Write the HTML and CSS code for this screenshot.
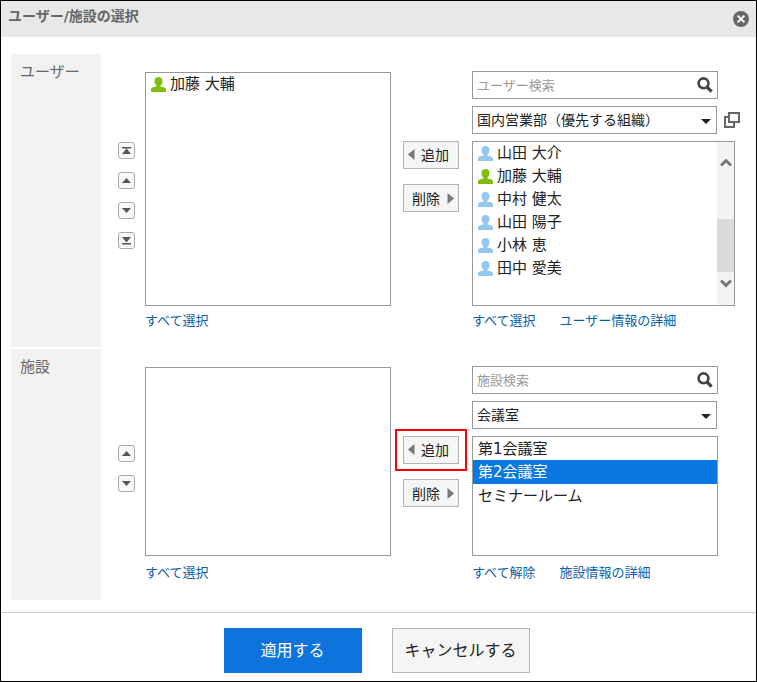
FILE: index.html
```html
<!DOCTYPE html>
<html lang="ja">
<head>
<meta charset="utf-8">
<meta name="viewport" content="width=device-width, initial-scale=1">
<title>ユーザー/施設の選択</title>
<link rel="stylesheet" href="styles.css">
</head>
<body>
<svg class="defs" aria-hidden="true">
  <symbol id="person" viewBox="0 0 15 15"><path d="M7.500 0C5 0 3.500 1.500 3.500 4c0 1.900.8 3.600 2 4.600v1C4.500 10.100 0 10.200 0 12.400V15h15v-2.600c0-2.200-4.500-2.300-5.500-2.800v-1c1.200-1 2-2.700 2-4.600C11.500 1.500 10 0 7.500 0z"/></symbol>
  <symbol id="search" viewBox="0 0 16 16"><circle cx="6.500" cy="6.300" r="4.900" fill="none" stroke="currentColor" stroke-width="2.600"/><path d="M10 10l4.600 4.600" stroke="currentColor" stroke-width="3.200"/></symbol>
  <symbol id="up" viewBox="0 0 17 17"><path d="M8.500 6L13 11H4z"/></symbol>
  <symbol id="down" viewBox="0 0 17 17"><path d="M8.500 11L4 6h9z"/></symbol>
  <symbol id="top" viewBox="0 0 17 17"><path d="M4 5h9v1.500H4zM8.500 6.500L13 12H4z"/></symbol>
  <symbol id="bottom" viewBox="0 0 17 17"><path d="M4 11h9v1.500H4zM8.500 10.500L4 5h9z"/></symbol>
  <symbol id="left" viewBox="0 0 7 11"><path d="M6.500 0v11L0 5.500z"/></symbol>
  <symbol id="right" viewBox="0 0 7 11"><path d="M.5 0v11L7 5.500z"/></symbol>
  <symbol id="caret" viewBox="0 0 10 5"><path d="M0 0h10L5 5z"/></symbol>
</svg>
<main class="dialog" role="dialog" aria-labelledby="dialog-title">
  <header class="header">
    <h1 class="title" id="dialog-title">ユーザー/施設の選択</h1>
    <button class="close" type="button" aria-label="閉じる">
      <svg viewBox="0 0 16 16"><circle cx="8" cy="8" r="8" fill="#686868"/><path d="M4.600 4.600l6.800 6.800M11.400 4.600l-6.800 6.800" stroke="#fff" stroke-width="2"/></svg>
    </button>
  </header>

  <div class="body">
    <section class="section">
      <h2 class="label">ユーザー</h2>
      <div class="picker picker-users">
        <div class="order">
          <button type="button" aria-label="先頭へ"><svg><use href="#top"/></svg></button>
          <button type="button" aria-label="上へ"><svg><use href="#up"/></svg></button>
          <button type="button" aria-label="下へ"><svg><use href="#down"/></svg></button>
          <button type="button" aria-label="末尾へ"><svg><use href="#bottom"/></svg></button>
        </div>
        <div class="box chosen">
          <ul class="people">
            <li><svg class="person me"><use href="#person"/></svg>加藤 大輔</li>
          </ul>
        </div>
        <div class="move">
          <button class="add" type="button"><svg><use href="#left"/></svg>追加</button>
          <button class="remove" type="button">削除<svg><use href="#right"/></svg></button>
        </div>
        <div class="source">
          <div class="search">
            <input type="text" placeholder="ユーザー検索" aria-label="ユーザー検索">
            <button type="button" aria-label="検索"><svg><use href="#search"/></svg></button>
          </div>
          <div class="group">
            <div class="select">
              <select aria-label="組織"><option>国内営業部（優先する組織）</option></select>
              <svg><use href="#caret"/></svg>
            </div>
            <button class="popup" type="button" aria-label="組織を選択"><svg viewBox="0 0 16 16" fill="none" stroke="#666" stroke-width="2"><path d="M5 1h10v9H5z"/><path d="M4 5H1v10h9v-4"/></svg></button>
          </div>
          <div class="box scrolling">
            <ul class="people">
              <li><svg class="person"><use href="#person"/></svg>山田 大介</li>
              <li><svg class="person me"><use href="#person"/></svg>加藤 大輔</li>
              <li><svg class="person"><use href="#person"/></svg>中村 健太</li>
              <li><svg class="person"><use href="#person"/></svg>山田 陽子</li>
              <li><svg class="person"><use href="#person"/></svg>小林 恵</li>
              <li><svg class="person"><use href="#person"/></svg>田中 愛美</li>
            </ul>
            <div class="scrollbar" aria-hidden="true">
              <svg viewBox="0 0 12 9"><path d="M1 7.500l5-5 5 5"/></svg>
              <div class="thumb"></div>
              <svg viewBox="0 0 12 9"><path d="M1 1.500l5 5 5-5"/></svg>
            </div>
          </div>
        </div>
        <div class="links chosen-links"><a href="#all">すべて選択</a></div>
        <div class="links source-links"><a href="#all">すべて選択</a><a href="#detail">ユーザー情報の詳細</a></div>
      </div>
    </section>

    <section class="section">
      <h2 class="label">施設</h2>
      <div class="picker picker-rooms">
        <div class="order">
          <button type="button" aria-label="上へ"><svg><use href="#up"/></svg></button>
          <button type="button" aria-label="下へ"><svg><use href="#down"/></svg></button>
        </div>
        <div class="box chosen"></div>
        <div class="move">
          <button class="add marked" type="button"><svg><use href="#left"/></svg>追加</button>
          <button class="remove" type="button">削除<svg><use href="#right"/></svg></button>
        </div>
        <div class="source">
          <div class="search">
            <input type="text" placeholder="施設検索" aria-label="施設検索">
            <button type="button" aria-label="検索"><svg><use href="#search"/></svg></button>
          </div>
          <div class="group">
            <div class="select">
              <select aria-label="施設グループ"><option>会議室</option></select>
              <svg><use href="#caret"/></svg>
            </div>
          </div>
          <select class="box rooms" multiple size="4" aria-label="施設">
            <option>第1会議室</option>
            <option selected>第2会議室</option>
            <option>セミナールーム</option>
          </select>
        </div>
        <div class="links chosen-links"><a href="#all">すべて選択</a></div>
        <div class="links source-links"><a href="#none">すべて解除</a><a href="#detail">施設情報の詳細</a></div>
      </div>
    </section>
  </div>

  <footer class="footer">
    <button class="apply" type="button">適用する</button>
    <button class="cancel" type="button">キャンセルする</button>
  </footer>
</main>
</body>
</html>
```

FILE: styles.css
```css
* { box-sizing: border-box; }

body, button, input, select {
  font-family: "DejaVu Sans", "Noto Sans CJK JP", sans-serif;
}

body { margin: 0; color: #222; background: #fff; }
button { margin: 0; padding: 0; color: #222; cursor: pointer; }
svg { display: block; flex: none; }
h1, h2, ul { margin: 0; padding: 0; }
.defs { position: absolute; width: 0; height: 0; }

.dialog {
  display: flex;
  flex-direction: column;
  min-height: 100vh;
  border: 1px solid #000;
}

.header {
  display: flex;
  justify-content: space-between;
  align-items: center;
  height: 36px;
  padding: 0 7px;
  background: #e8e8e8;
}
.title { padding-bottom: 6px; font-size: 14px; line-height: 20px; font-weight: 700; color: #666; }
.close { border: 0; background: none; }
.close svg { width: 16px; height: 16px; }

.body {
  display: flex;
  flex: 1;
  flex-direction: column;
  gap: 2px;
  padding: 17px 10px 12px;
}
.section { display: flex; }
.label {
  flex: none;
  width: 90px;
  padding: 7px 9px;
  font-size: 15px;
  line-height: 22px;
  font-weight: 400;
  color: #666;
  background: #f2f2f2;
}

.picker {
  display: grid;
  flex: 1;
  grid-template-columns: 17px minmax(0, 256fr) 56px minmax(0, 293fr);
  grid-template-rows: auto 20px;
  padding: 17px 6px 16px 17px;
  row-gap: 5px;
}
.picker-rooms { row-gap: 7px; padding-bottom: 17px; }
.order {
  display: flex;
  flex-direction: column;
  justify-content: center;
  gap: 13px;
  padding-top: 14px;
}
.order button {
  width: 17px;
  height: 17px;
  border: 1px solid #aaa;
  border-radius: 3px;
  background: #f8f8f8;
}
.order svg { width: 17px; height: 17px; margin: -1px; fill: #555; }

.box { border: 1px solid #999; background: #fff; }
.chosen { margin: 1px 0 0 10px; }
.people { flex: 1; list-style: none; }
.people li {
  display: flex;
  align-items: center;
  gap: 4px;
  height: 23px;
  padding-left: 5px;
  font-size: 15px;
  line-height: 23px;
}
.person { width: 15px; height: 15px; fill: #95c8ee; }
.person.me { fill: #7fbf0a; }

.move {
  display: flex;
  flex-direction: column;
  gap: 15px;
  margin: 70px -12px 0 12px;
}
.move button {
  position: relative;
  display: flex;
  align-items: center;
  justify-content: space-between;
  height: 28px;
  border: 1px solid #b4b4b4;
  background: #f5f5f5;
  font-size: 14px;
}
.move .add { padding: 0 9px 2px 4px; }
.move .remove { padding: 0 4px 0 8px; }
.move svg { width: 7px; height: 11px; fill: #777; }
.marked::after {
  content: "";
  position: absolute;
  inset: -8px -9px;
  border: 2px solid #f00;
}

.source { display: flex; flex-direction: column; gap: 7px; margin-left: 25px; }
.picker-rooms .source { margin-right: 22px; }
.picker-users .search { margin-right: 22px; }
.search {
  display: flex;
  align-items: center;
  height: 28px;
  padding: 0 4px;
  border: 1px solid #999;
}
.search input {
  flex: 1;
  min-width: 0;
  padding: 0;
  border: 0;
  outline: 0;
  background: none;
  font-size: 13px;
}
.search input::placeholder { color: #999; opacity: 1; }
.search button { border: 0; background: none; color: #444; }
.search svg { width: 16px; height: 16px; }

.group { display: flex; align-items: center; gap: 7px; padding-right: 1px; }
.picker-users .group { padding-right: 0; }
.select { position: relative; flex: 1; min-width: 0; }
.select select {
  display: block;
  width: 100%;
  height: 28px;
  padding: 0 24px 0 4px;
  border: 1px solid #999;
  border-radius: 0;
  appearance: none;
  background: #fff;
  color: #222;
  font-size: 14px;
}
.select svg { position: absolute; right: 6px; top: 13px; width: 10px; height: 5px; fill: #222; pointer-events: none; }
.popup { border: 0; background: none; }
.popup svg { width: 16px; height: 16px; }

.scrolling { display: flex; height: 165px; margin-right: 5px; }
.scrollbar {
  display: flex;
  flex-direction: column;
  align-items: center;
  width: 17px;
  padding: 16px 0 17px;
  background: #f4f4f4;
}
.scrollbar svg { width: 12px; height: 9px; fill: none; stroke: #777; stroke-width: 3; }
.thumb { width: 17px; height: 53px; margin: auto 0 7px; background: #dadada; }

.rooms {
  width: 100%;
  height: 120px;
  padding: 0;
  border-radius: 0;
  overflow: hidden;
  outline: 0;
  color: #222;
  font-size: 15px;
}
.rooms option { height: 24px; padding: 0 5px; line-height: 20px; }
.rooms option:first-child { height: 23px; }
.rooms option:checked { color: #fff; background: #0a78e2 linear-gradient(#0a78e2, #0a78e2); }

.links { display: flex; gap: 24px; font-size: 13px; line-height: 20px; white-space: nowrap; }
.links a { color: #0a5fae; text-decoration: none; }
.chosen-links { grid-column: 2; margin-left: 10px; }
.source-links { grid-column: 4; margin-left: 25px; }

.footer {
  display: flex;
  justify-content: center;
  gap: 30px;
  padding: 15px 4px 8px 0;
  border-top: 1px solid #ccc;
}
.footer button { width: 138px; height: 45px; padding-bottom: 3px; font-size: 16px; }
.apply { border: 0; background: #0d74de; color: #fff; }
.cancel { border: 1px solid #b4b4b4; background: #f5f5f5; }
```
